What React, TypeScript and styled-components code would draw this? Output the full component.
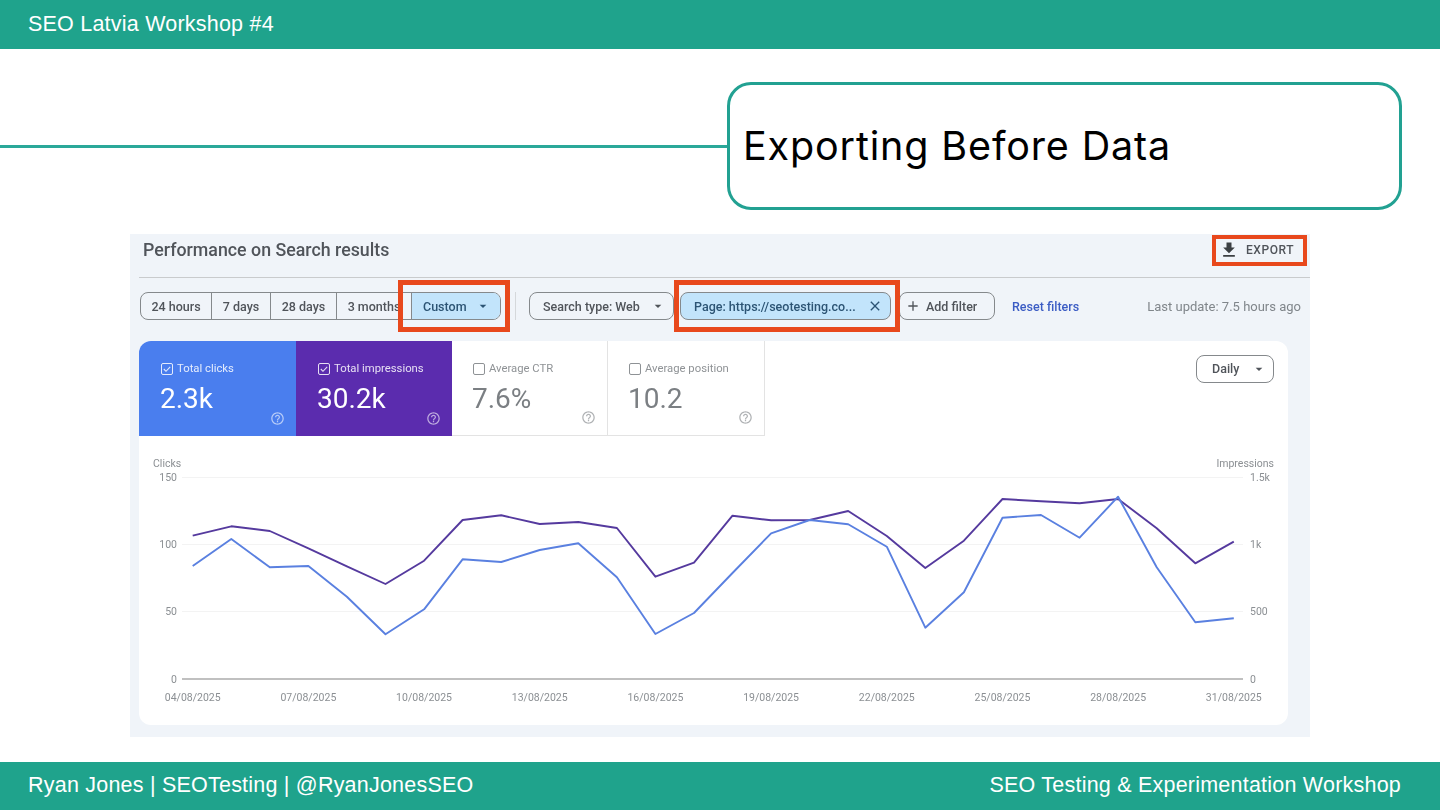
import React from "react";
import styled, { createGlobalStyle } from "styled-components";

const Global = createGlobalStyle`
  html, body { margin: 0; padding: 0; background: #fff; }
  body { font-family: "Liberation Sans", Arial, sans-serif; }
  * { box-sizing: border-box; }
`;

const Page = styled.div`
  width: 1440px;
  height: 810px;
  overflow: hidden;
  display: flex;
  flex-direction: column;
`;
const TopBar = styled.header`
  height: 48.5px;
  flex: none;
  background: #1fa38c;
  color: #fff;
  padding: 0 28px;
  display: flex;
  align-items: center;
  font-size: 21.5px;
  letter-spacing: 0.22px;
`;
const BottomBar = styled.footer`
  height: 48.5px;
  flex: none;
  margin-top: auto;
  background: #1fa38c;
  color: #fff;
  padding: 0 39px 0 28px;
  display: flex;
  align-items: center;
  justify-content: space-between;
  font-size: 21.5px;
  letter-spacing: 0.22px;
`;
const TitleRow = styled.section`
  margin-top: 33.5px;
  height: 128px;
  padding-right: 38px;
  display: flex;
  align-items: center;
  flex: none;
`;
const Rule = styled.div`
  flex: 1;
  height: 3px;
  background: #2aa899;
`;
const TitleBox = styled.div`
  width: 675px;
  height: 128px;
  border: 3px solid #22a192;
  border-radius: 24px;
  padding: 0 13px;
  display: flex;
  align-items: center;
`;
const Title = styled.h1`
  margin: 0;
  font-family: Inter, "Open Sans", sans-serif;
  font-weight: 400;
  font-size: 39.5px;
  letter-spacing: 0.85px;
  color: #000;
`;
const Shot = styled.section`
  margin: 24px 0 0 130px;
  width: 1180px;
  height: 503px;
  background: #f0f4f9;
  padding-left: 9px;
  font-family: Roboto, sans-serif;
  filter: blur(0.35px);
  flex: none;
`;
const ShotHead = styled.div`
  height: 44px;
  border-bottom: 1px solid #c9cbcd;
  display: flex;
  align-items: flex-start;
  justify-content: space-between;
  padding: 1px 3px 0 4px;
`;
const ShotTitle = styled.h2`
  margin: 5px 0 0;
  font-size: 17.8px;
  line-height: 20px;
  font-weight: 500;
  color: #50545a;
`;
const Marked = styled.div`
  position: relative;
  display: flex;
  flex: none;
`;
const RedFrame = styled.span<{ $l: number; $t: number; $w: number; $h: number; $b?: number }>`
  position: absolute;
  left: ${(p) => p.$l}px;
  top: ${(p) => p.$t}px;
  width: ${(p) => p.$w}px;
  height: ${(p) => p.$h}px;
  border: ${(p) => p.$b ?? 5}px solid #e8481c;
  pointer-events: none;
`;
const ExportBtn = styled.div`
  width: 95px;
  height: 31px;
  display: flex;
  align-items: center;
  gap: 7px;
  padding: 0 0 2px 7px;
  font-size: 12px;
  font-weight: 500;
  letter-spacing: 0.55px;
  color: #50545a;
`;
const FilterRow = styled.div`
  height: 63px;
  display: flex;
  align-items: center;
  padding-bottom: 7px;
  padding-right: 9px;
`;
const Segments = styled.div`
  display: flex;
  height: 28px;
  margin-left: 1px;
  border: 1px solid #85898c;
  border-radius: 8px;
  flex: none;
`;
const Segment = styled.div<{ $w: number; $on?: boolean }>`
  width: ${(p) => p.$w}px;
  display: flex;
  align-items: center;
  justify-content: ${(p) => (p.$on ? "flex-start" : "center")};
  gap: 8px;
  padding-left: ${(p) => (p.$on ? 11 : 0)}px;
  font-size: 12.5px;
  font-weight: 500;
  color: ${(p) => (p.$on ? "#2c5474" : "#50545a")};
  background: ${(p) => (p.$on ? "#c2e4fb" : "transparent")};
  border-left: ${(p) => (p.$on ? "1px solid #85898c" : "none")};
  border-right: ${(p) => (p.$on ? "none" : "1px solid #85898c")};
  border-radius: ${(p) => (p.$on ? "0 7px 7px 0" : "0")};
  white-space: nowrap;
  &:first-child { border-radius: 7px 0 0 7px; }
  &:nth-child(4) { border-right: none; }
`;
const VSep = styled.div`
  width: 1px;
  height: 28px;
  background: #d5d8db;
  margin: 0 13px 0 14px;
  flex: none;
`;
const Pill = styled.div<{ $w: number; $on?: boolean; $ml?: number }>`
  width: ${(p) => p.$w}px;
  height: 28px;
  margin-left: ${(p) => p.$ml ?? 0}px;
  flex: none;
  display: flex;
  align-items: center;
  justify-content: space-between;
  padding: 0 7px 0 13px;
  border: 1px solid #85898c;
  border-radius: 8px;
  background: ${(p) => (p.$on ? "#c2e4fb" : "transparent")};
  font-size: 12.5px;
  font-weight: 500;
  color: ${(p) => (p.$on ? "#2c5474" : "#50545a")};
  white-space: nowrap;
`;
const AddPill = styled(Pill)`
  justify-content: flex-start;
  gap: 5px;
  padding: 0 0 0 5px;
`;
const ResetLink = styled.a`
  margin-left: 17px;
  font-size: 12.5px;
  font-weight: 500;
  color: #3b5cc4;
  white-space: nowrap;
`;
const Updated = styled.span`
  margin-left: auto;
  font-size: 13px;
  color: #80868b;
  white-space: nowrap;
`;
const Card = styled.div`
  width: 1149px;
  height: 384px;
  background: #fff;
  border-radius: 12px;
`;
const CardTop = styled.div`
  height: 95px;
  display: flex;
  justify-content: space-between;
  align-items: flex-start;
  padding-right: 14px;
`;
const Tiles = styled.div`
  display: flex;
`;
const Tile = styled.div<{ $bg?: string; $w: number }>`
  position: relative;
  width: ${(p) => p.$w}px;
  height: 95px;
  padding: 21px 0 0 ${(p) => (p.$bg ? 21 : 20)}px;
  background: ${(p) => p.$bg ?? "#fff"};
  color: ${(p) => (p.$bg ? "#fff" : "#7b7f83")};
  border-right: ${(p) => (p.$bg ? "none" : "1px solid #e3e3e3")};
  border-bottom: ${(p) => (p.$bg ? "none" : "1px solid #e3e3e3")};
  &:first-child { border-top-left-radius: 12px; }
`;
const TileLabel = styled.div`
  display: flex;
  align-items: center;
  gap: 3px;
  font-size: 11.3px;
  line-height: 14px;
  opacity: 0.85;
`;
const TileValue = styled.div`
  margin-top: 5px;
  font-size: 28px;
  line-height: 36px;
  font-weight: 400;
`;
const HelpSpot = styled.span`
  position: absolute;
  right: 11px;
  bottom: 10px;
  display: flex;
  opacity: 0.6;
`;
const DailyBtn = styled.div`
  width: 78px;
  height: 28px;
  margin-top: 13.5px;
  border: 1px solid #85898c;
  border-radius: 8px;
  display: flex;
  align-items: center;
  justify-content: space-between;
  padding: 0 6px 0 15px;
  font-size: 12.5px;
  font-weight: 500;
  color: #50545a;
`;
const ChartSvg = styled.svg`
  display: block;
  font-family: Roboto, sans-serif;
  font-size: 10.5px;
  fill: #8b8f93;
`;

const Caret = ({ c = "#50545a" }: { c?: string }) => (
  <svg width="16" height="16" viewBox="0 0 24 24" fill={c}><path d="M7 10l5 5 5-5z" /></svg>
);
const Check = ({ on, c }: { on: boolean; c: string }) => (
  <svg width="14" height="14" viewBox="0 0 14 14" fill="none" stroke={c} strokeWidth="1">
    <rect x="1.5" y="1.5" width="11" height="11" rx="1.5" />
    {on && <path d="M3.8 7l2.2 2.3 4.2-4.5" strokeWidth="1.1" />}
  </svg>
);
const Help = ({ c }: { c: string }) => (
  <svg width="15" height="15" viewBox="0 0 24 24" fill={c}>
    <path d="M11 18h2v-2h-2v2zm1-16C6.48 2 2 6.48 2 12s4.48 10 10 10 10-4.48 10-10S17.52 2 12 2zm0 18c-4.41 0-8-3.59-8-8s3.59-8 8-8 8 3.59 8 8-3.59 8-8 8zm0-14c-2.21 0-4 1.79-4 4h2c0-1.1.9-2 2-2s2 .9 2 2c0 2-3 1.75-3 5h2c0-2.25 3-2.5 3-5 0-2.21-1.79-4-4-4z" />
  </svg>
);

const purpleY = [535.7,526.3,531,548.3,566.3,584,560.7,520,515.3,524,522,528,576.7,562.7,515.7,520.3,520,511,536,568,540.7,499,501.3,503.3,499,528.3,563.3,541.7];
const blueY = [566,539,567.3,566,596.7,634.3,609.3,559.3,562,550,543.3,577.3,634,613,573,533.3,520,524.3,546.7,627.7,592.3,517.7,515,537.7,496.7,567.3,622.3,618.3];
const X0 = 139;
const Y0 = 436;
const px = (i: number) => 192.7 + 38.56 * i - X0;
const line = (ys: number[]) => ys.map((y, i) => `${px(i).toFixed(1)},${(y - Y0).toFixed(1)}`).join(" ");

const grid = [
  { v: "150", r: "1.5k", y: 477.5 },
  { v: "100", r: "1k", y: 544.5 },
  { v: "50", r: "500", y: 611.5 },
];
const dates = ["04", "07", "10", "13", "16", "19", "22", "25", "28", "31"];

const tiles = [
  { label: "Total clicks", value: "2.3k", bg: "#4a7eee", w: 157, on: true },
  { label: "Total impressions", value: "30.2k", bg: "#5b2cae", w: 156, on: true },
  { label: "Average CTR", value: "7.6%", w: 156, on: false },
  { label: "Average position", value: "10.2", w: 157, on: false },
];

export default function App() {
  return (
    <Page>
      <Global />
      <TopBar>SEO Latvia Workshop #4</TopBar>
      <TitleRow>
        <Rule />
        <TitleBox>
          <Title>Exporting Before Data</Title>
        </TitleBox>
      </TitleRow>
      <Shot>
        <ShotHead>
          <ShotTitle>Performance on Search results</ShotTitle>
          <Marked>
            <ExportBtn>
              <svg width="20" height="20" viewBox="0 0 24 24" fill="#3c4043">
                <path d="M19 9h-4V3H9v6H5l7 7 7-7zM5 18v2h14v-2H5z" />
              </svg>
              EXPORT
            </ExportBtn>
            <RedFrame $l={0} $t={0} $w={95} $h={31} $b={4} />
          </Marked>
        </ShotHead>
        <FilterRow>
          <Marked>
            <Segments>
              <Segment $w={71}>24 hours</Segment>
              <Segment $w={59}>7 days</Segment>
              <Segment $w={66}>28 days</Segment>
              <Segment $w={74}>3 months</Segment>
              <Segment $w={89} $on>
                Custom
                <Caret c="#2c5474" />
              </Segment>
            </Segments>
            <RedFrame $l={259} $t={-12} $w={112} $h={52} />
          </Marked>
          <VSep />
          <Marked>
            <Pill $w={145}>
              Search type: Web
              <Caret />
            </Pill>
            <Pill $w={211} $on $ml={6}>
              Page: https://seotesting.co...
              <svg width="16" height="16" viewBox="0 0 24 24" fill="#2c5474">
                <path d="M19 6.41L17.59 5 12 10.59 6.41 5 5 6.41 10.59 12 5 17.59 6.41 19 12 13.41 17.59 19 19 17.59 13.41 12z" />
              </svg>
            </Pill>
            <RedFrame $l={145} $t={-12} $w={226} $h={52} />
          </Marked>
          <AddPill $w={96} $ml={8}>
            <svg width="16" height="16" viewBox="0 0 24 24" fill="#50545a">
              <path d="M19 13h-6v6h-2v-6H5v-2h6V5h2v6h6v2z" />
            </svg>
            Add filter
          </AddPill>
          <ResetLink>Reset filters</ResetLink>
          <Updated>Last update: 7.5 hours ago</Updated>
        </FilterRow>
        <Card>
          <CardTop>
            <Tiles>
              {tiles.map((t) => (
                <Tile key={t.label} $bg={t.bg} $w={t.w}>
                  <TileLabel>
                    <Check on={t.on} c={t.bg ? "#fff" : "#7b7f83"} />
                    {t.label}
                  </TileLabel>
                  <TileValue>{t.value}</TileValue>
                  <HelpSpot>
                    <Help c={t.bg ? "#fff" : "#7b7f83"} />
                  </HelpSpot>
                </Tile>
              ))}
            </Tiles>
            <DailyBtn>
              Daily
              <Caret />
            </DailyBtn>
          </CardTop>
          <ChartSvg width="1149" height="289" viewBox="0 0 1149 289">
            <text x={14} y={30.5}>Clicks</text>
            <text x={1135} y={30.5} textAnchor="end">Impressions</text>
            {grid.map((g) => (
              <g key={g.v}>
                <line x1={43} x2={1104} y1={g.y - Y0} y2={g.y - Y0} stroke="#f3f3f3" strokeWidth="1" />
                <text x={38} y={g.y - Y0 + 3.8} textAnchor="end">{g.v}</text>
                <text x={1111} y={g.y - Y0 + 3.8}>{g.r}</text>
              </g>
            ))}
            <line x1={43} x2={1104} y1={243} y2={243} stroke="#ababab" strokeWidth="1.4" />
            <text x={38} y={246.8} textAnchor="end">0</text>
            <text x={1111} y={246.8}>0</text>
            {dates.map((d, k) => (
              <text key={d} x={px(k * 3)} y={264.8} textAnchor="middle">{d}/08/2025</text>
            ))}
            <polyline points={line(purpleY)} fill="none" stroke="#553a9e" strokeWidth="1.9" strokeLinejoin="round" />
            <polyline points={line(blueY)} fill="none" stroke="#5a80e0" strokeWidth="1.9" strokeLinejoin="round" />
          </ChartSvg>
        </Card>
      </Shot>
      <BottomBar>
        <span>Ryan Jones | SEOTesting | @RyanJonesSEO</span>
        <span>SEO Testing &amp; Experimentation Workshop</span>
      </BottomBar>
    </Page>
  );
}
